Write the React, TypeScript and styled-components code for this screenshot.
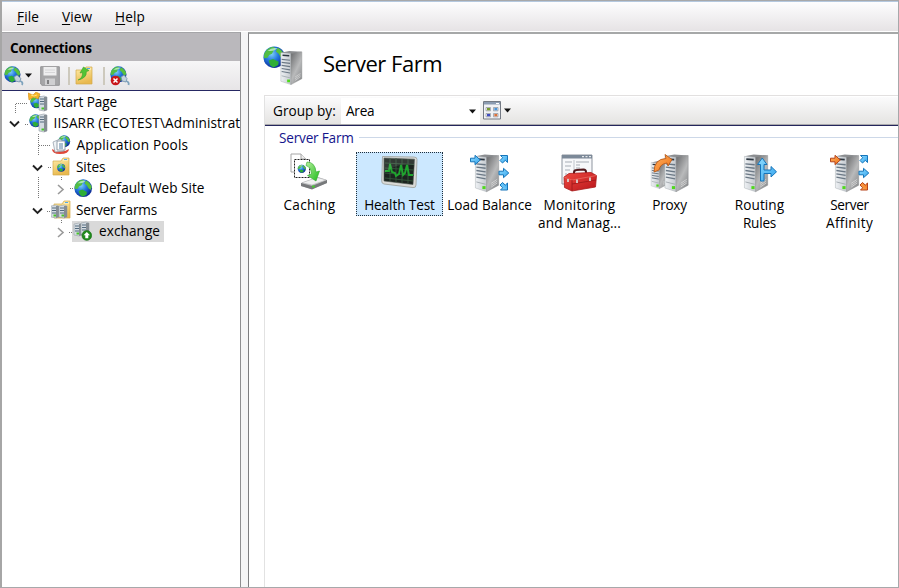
import React from "react";
import styled, { createGlobalStyle } from "styled-components";

const GlobalStyle = createGlobalStyle`
  * { box-sizing: border-box; }
  html, body { margin: 0; padding: 0; overflow: hidden; }
  body { font-family: "Open Sans", "Noto Sans", sans-serif; font-size: 13.6px; color: #000; background: #fff; }
  svg { display: block; flex: none; }
`;

const Window = styled.div`
  width: 899px;
  height: 588px;
  display: flex;
  flex-direction: column;
  background: #f5f5f6;
  border: 1px solid #a7a8aa;
  border-left: 2px solid #a6a6a6;
`;

const MenuBar = styled.nav`
  height: 31px;
  display: flex;
  align-items: center;
  flex: none;
  padding-left: 15px;
  gap: 23px;
  border-top: 1px solid #b4c8df;
  border-bottom: 1px solid #fff;
  background: linear-gradient(#fdfdfe, #e6e3e5);
`;

const Label = styled.span<{ $track?: number; $weight?: number }>`
  white-space: nowrap;
  letter-spacing: ${(p) => p.$track ?? 0}px;
  font-weight: ${(p) => p.$weight ?? 400};
  line-height: 18px;
  u { text-underline-offset: 2px; text-decoration-thickness: 1px; }
`;

const Body = styled.div`
  flex: 1;
  display: flex;
  gap: 7px;
  min-height: 0;
`;

const Sidebar = styled.aside`
  width: 239px;
  display: flex;
  flex-direction: column;
  flex: none;
  overflow: hidden;
  background: #fff;
  border-right: 1px solid #8e8e90;
  border-top: 1px solid #a5a5a8;
`;

const SideHeader = styled.header`
  height: 28px;
  flex: none;
  padding: 5px 0 0 8px;
  background: #bab8bc;
`;

const SideTools = styled.div`
  height: 30px;
  flex: none;
  display: flex;
  align-items: center;
  padding-left: 2px;
  background: linear-gradient(#f6f6f7, #e7e5e7);
  border-bottom: 1px solid #262863;
`;

const DropButton = styled.div`
  display: flex;
  align-items: center;
  gap: 1px;
  padding-right: 8px;
`;

const Divider = styled.i<{ $before: number; $after: number }>`
  width: 2px;
  height: 18px;
  margin: 0 ${(p) => p.$after}px 0 ${(p) => p.$before}px;
  background: #cdc9bd;
`;

const Tree = styled.div`
  display: flex;
  flex-direction: column;
`;

const TreeRow = styled.div`
  height: 21.6px;
  display: flex;
  align-items: center;
  flex: none;
`;

const Node = styled.div<{ $selected?: boolean; $gap: number }>`
  display: flex;
  align-items: center;
  gap: ${(p) => p.$gap}px;
  height: 21px;
  padding-right: 4px;
  background: ${(p) => (p.$selected ? "#d9d9d9" : "transparent")};
`;

const Pane = styled.main`
  flex: 1;
  min-width: 0;
  display: flex;
  flex-direction: column;
  background: #fff;
  border-left: 1px solid #7d7d80;
  border-top: 2px solid #a6a8a8;
`;

const TitleBar = styled.header`
  height: 61px;
  flex: none;
  display: flex;
  align-items: center;
  padding-left: 14px;
  gap: 19px;
`;

const Title = styled.h1`
  margin: 0 0 3px;
  font-size: 22px;
  font-weight: 400;
  line-height: 30px;
  letter-spacing: -0.48px;
`;

const Content = styled.section`
  flex: 1;
  margin-left: 15px;
  border-left: 1px solid #e2e2e2;
  border-top: 1px solid #e2e0e0;
`;

const GroupBar = styled.div`
  height: 30px;
  display: flex;
  align-items: center;
  padding-bottom: 1px;
  border-top: 1px solid #fff;
  border-bottom: 1px solid #24265c;
  box-shadow: inset 0 -1px #a9a9ac;
  background: linear-gradient(#fbfbfc, #e4e3e1);
`;

const GroupCaption = styled.div`
  width: 76px;
  padding-left: 8px;
`;

const Combo = styled.div`
  width: 139px;
  height: 26px;
  display: flex;
  align-items: center;
  justify-content: space-between;
  padding: 1px 4px 0 5px;
  background: #fff;
`;

const ViewButton = styled.div`
  display: flex;
  align-items: center;
  gap: 3px;
  padding-left: 3px;
`;

const GroupTitle = styled.div`
  display: flex;
  align-items: center;
  height: 22px;
  padding: 2px 0 0 14px;
  gap: 5px;
  color: #15158c;
  &::after { content: ""; flex: 1; height: 1px; margin-bottom: 2px; background: #cdd8e8; }
`;

const Features = styled.div`
  display: flex;
  gap: 3px;
  padding: 4px 0 0 1px;
`;

const Feature = styled.div<{ $selected?: boolean }>`
  width: 87px;
  min-height: 64px;
  align-self: flex-start;
  display: flex;
  flex-direction: column;
  align-items: center;
  border: 1px dotted ${(p) => (p.$selected ? "#1f2f3c" : "transparent")};
  background: ${(p) => (p.$selected ? "#cce8ff" : "transparent")};
`;

const Caption = styled.div`
  display: flex;
  flex-direction: column;
  align-items: center;
  margin-top: 3px;
`;

const Defs = styled.svg`
  position: absolute;
`;

const Gradients = () => (
  <Defs width="0" height="0">
    <defs>
      <radialGradient id="sea" cx=".38" cy=".35" r=".7">
        <stop offset="0" stopColor="#7fd0fa" />
        <stop offset=".45" stopColor="#2378df" />
        <stop offset="1" stopColor="#0b258f" />
      </radialGradient>
      <linearGradient id="front" x2="1">
        <stop offset="0" stopColor="#eef1f4" />
        <stop offset="1" stopColor="#c4c9ce" />
      </linearGradient>
      <linearGradient id="side" x2=".7" y2="1">
        <stop offset="0" stopColor="#68696b" />
        <stop offset=".6" stopColor="#b9babb" />
        <stop offset="1" stopColor="#8d8f91" />
      </linearGradient>
      <linearGradient id="folder" y2="1" x2=".3">
        <stop offset="0" stopColor="#fff0ae" />
        <stop offset="1" stopColor="#e9b94f" />
      </linearGradient>
      <linearGradient id="blue" y2="1">
        <stop offset="0" stopColor="#8edcff" />
        <stop offset="1" stopColor="#35a5ee" />
      </linearGradient>
      <linearGradient id="orange" y2="1">
        <stop offset="0" stopColor="#ffb15e" />
        <stop offset="1" stopColor="#f07318" />
      </linearGradient>
      <linearGradient id="green" y2="1">
        <stop offset="0" stopColor="#b4ef9b" />
        <stop offset="1" stopColor="#1fbc1c" />
      </linearGradient>
      <linearGradient id="red" y2="1">
        <stop offset="0" stopColor="#ee4a40" />
        <stop offset="1" stopColor="#b9141a" />
      </linearGradient>
    </defs>
  </Defs>
);

/* Globe on a 20-unit square. */
const Globe = ({ x = 0, y = 0, s = 1 }: { x?: number; y?: number; s?: number }) => (
  <g transform={`translate(${x} ${y}) scale(${s})`}>
    <circle cx="10" cy="10" r="9.6" fill="url(#sea)" />
    <path d="M1.5 6Q4 1.5 9 .7L12 2.5 9.5 4 8 7 5.5 8 4 10.5 1 11Q.3 8 1.5 6Z" fill="#52bd45" />
    <path d="M13 1.5Q18 4 19.3 9L18 12 15.8 10 14 7 11.5 5Z" fill="#58c03c" />
    <path d="M5 13L9 11.5 14 14 13.5 17 9.5 19.3 6.5 17.5Z" fill="#2fae36" />
    <path d="M4 4.5Q8 .8 13 2L10 4 7 4.5Z" fill="#e9ffff" opacity=".6" />
  </g>
);

/* Tower server on a 26 by 40 canvas. */
const Tower = ({ x = 0, y = 0, s = 1 }: { x?: number; y?: number; s?: number }) => (
  <g transform={`translate(${x} ${y}) scale(${s})`}>
    <path d="M1 2L11 0 26 1 13 4Z" fill="#8b8d90" />
    <path d="M1 2L13 3V40L1 36Z" fill="url(#front)" stroke="#a7adb2" strokeWidth=".5" />
    <path d="M13 3L26 1V33L13 40Z" fill="url(#side)" stroke="#86888a" strokeWidth=".5" />
    <path d="M2 10L12 11M2 13.6L12 14.8M2 17.2L12 18.6M2 20.8L12 22.4M2 24.4L12 26.2" stroke="#6b7885" strokeWidth="1.4" />
    <path d="M3 5L11 5.6" stroke="#2c3640" strokeWidth="1.8" />
    <path d="M2 29.5L12 32" stroke="#a2a9af" />
    <path d="M18 33L24.5 28.6M18 35L24.5 30.6M18 31L24.5 26.6" stroke="#e6e6e6" strokeWidth=".7" />
    <rect x="8.5" y="34" width="3.4" height="3.2" fill="#4fd81c" />
  </g>
);

const Rack = ({ x, y, h = 14 }: { x: number; y: number; h?: number }) => (
  <g transform={`translate(${x} ${y})`}>
    <path d={`M0 1L5 0 8 1V${h - 1}L5 ${h}L0 ${h - 1}Z`} fill="#d4dbe1" stroke="#98a1a8" strokeWidth=".6" />
    <path d={`M5 1L8 1V${h - 1}L5 ${h}Z`} fill="#858d94" />
    <path d="M1 3H5M1 5.5H5M1 8H5" stroke="#536b7e" />
    <rect x="2.5" y={h - 3.5} width="2.5" height="2" fill="#49c529" />
  </g>
);

const Caret = () => (
  <svg width="7" height="5" viewBox="0 0 7 5"><path d="M0 .5H7L3.5 4.5Z" fill="#111" /></svg>
);

const FolderShape = () => (
  <>
    <path d="M1 4H9L11 1H17V18H1Z" fill="url(#folder)" stroke="#d3a94c" strokeWidth=".7" />
    <path d="M11 3H16" stroke="#fff8d2" />
    <path d="M12 2.5H15" stroke="#55a8e7" />
  </>
);

const ConnectIcon = () => (
  <svg width="20" height="20" viewBox="0 0 20 20">
    <Globe s={0.84} />
    <path d="M10 11L13 9 17 12.5 15.5 16 11.5 15Z" fill="#c4d2de" stroke="#6c8ea9" strokeWidth=".8" />
    <path d="M16 15Q19.5 16 18 19" fill="none" stroke="#7fa3bd" strokeWidth="1.8" />
  </svg>
);

const DisconnectIcon = () => (
  <svg width="20" height="20" viewBox="0 0 20 20">
    <Globe s={0.84} />
    <path d="M11 11L14 9 17 12.5 16 16 12 15Z" fill="#c4d2de" stroke="#6c8ea9" strokeWidth=".8" />
    <path d="M16 15Q19.5 16 18.5 19" fill="none" stroke="#7fa3bd" strokeWidth="1.8" />
    <circle cx="5.5" cy="14.5" r="4.8" fill="#c8161b" />
    <path d="M3.5 12.5L7.5 16.5M7.5 12.5L3.5 16.5" stroke="#fff" strokeWidth="1.5" />
  </svg>
);

const SaveIcon = () => (
  <svg width="20" height="20" viewBox="0 0 20 20">
    <path d="M.7.7H19.3V19.3H2L.7 18Z" fill="#a6a6a8" stroke="#949496" />
    <path d="M3.5 1H16.5V9.5H3.5Z" fill="#eeeeef" />
    <path d="M5 12.5H15V19H5Z" fill="#cfcfd1" />
    <path d="M7 14H9V18H7Z" fill="#808082" />
    <path d="M5 4H15M5 6.5H15" stroke="#d6d6d8" />
  </svg>
);

const UpFolderIcon = () => (
  <svg width="18" height="19" viewBox="0 0 18 19">
    <FolderShape />
    <path d="M3 14Q8 12 7.5 6.5L5 7 8.5 1 14 4.5 11.3 5.7Q12 12 3 14Z" fill="#52c434" stroke="#3c9f2c" strokeWidth=".6" />
  </svg>
);

const StartIcon = () => (
  <svg width="20" height="20" viewBox="0 0 20 20">
    <Globe x={2} y={3} s={0.68} />
    <Rack x={11} y={4} h={15} />
    <path d="M0 1L5 3 8 0 12 2 10 7 6 5 1 8Z" fill="#f7b52a" stroke="#d48816" strokeWidth=".6" />
    <path d="M3 3L6 4 9 3" stroke="#ffe779" fill="none" />
  </svg>
);
const HostIcon = () => (
  <svg width="20" height="20" viewBox="0 0 20 20">
    <Globe x={0} y={1} s={0.67} />
    <Rack x={10} y={1} h={18} />
  </svg>
);
const PoolsIcon = () => (
  <svg width="20" height="20" viewBox="0 0 20 20">
    <Globe x={7} y={0} s={0.62} />
    <path d="M1 14Q1 19 9 19Q18 19 18 14L14 16H5Z" fill="#df493b" />
    <path d="M2 7L9 4 13 7V16L4 17Z" fill="#f0f3f6" stroke="#8e9aa6" strokeWidth=".7" />
    <path d="M6 6H14V15H6Z" fill="#fff" stroke="#798998" strokeWidth=".8" />
    <path d="M8 9H12M8 11H12M8 13H12" stroke="#537ca2" />
  </svg>
);
const SitesIcon = () => (
  <svg width="19" height="19" viewBox="0 0 19 19">
    <FolderShape />
    <Globe x={5} y={6.5} s={0.42} />
  </svg>
);
const SiteIcon = () => <svg width="20" height="20" viewBox="0 0 20 20"><Globe x={1} y={1} s={0.92} /></svg>;
const FarmsIcon = () => (
  <svg width="20" height="20" viewBox="0 0 20 20">
    <g transform="translate(2 0)"><FolderShape /></g>
    <Rack x={0} y={5} h={13} />
    <Rack x={8} y={5} h={13} />
  </svg>
);
const ExchangeIcon = () => (
  <svg width="20" height="20" viewBox="0 0 20 20">
    <Rack x={2} y={2} h={13} />
    <Rack x={9} y={1} h={13} />
    <circle cx="14.8" cy="14.5" r="4.9" fill="#1f8a1b" stroke="#1b6a17" strokeWidth=".5" />
    <path d="M14.8 11L18 14.2H16.3V17.2H13.3V14.2H11.6Z" fill="#fff" />
  </svg>
);

const HeaderIcon = () => (
  <svg width="41" height="41" viewBox="0 0 41 41">
    <Globe x={0} y={2} s={1.12} />
    <Tower x={17} y={7} s={0.84} />
  </svg>
);

const Svg40 = ({ children }: { children: React.ReactNode }) => (
  <svg width="40" height="40" viewBox="0 0 40 40">{children}</svg>
);

const CachingIcon = () => (
  <Svg40>
    <path d="M1 1H11L16 6V19H1Z" fill="#fff" stroke="#a5a5a5" />
    <path d="M11 1V6H16" fill="#eee" stroke="#a5a5a5" />
    <path d="M4.5 6.5H19.5V24.5H4.5Z" fill="#fff" stroke="#222" strokeDasharray="2 1" />
    <Globe x={7.5} y={11.5} s={0.43} />
    <path d="M11 30L28 24 37 27V30L22 36 11 33Z" fill="#b3b5b7" />
    <path d="M11 30L22 33 37 27V30L22 36.5 11 33Z" fill="#77797b" />
    <path d="M12 29.7L27 24.5 36 27 22 32Z" fill="#eff0f0" stroke="#b2b3b4" strokeWidth=".5" />
    <rect x="22" y="32.5" width="3" height="2" fill="#48c730" />
    <path d="M17 9Q25 9 26 19L29.5 18 26 28 17.5 22.5 21.5 21Q21 14 16 12.5Z" fill="url(#green)" stroke="#2da528" strokeWidth=".6" />
  </Svg40>
);
const HealthIcon = () => (
  <Svg40>
    <path d="M2.5 3.5L34 4Q37 4 37 6.5L36 32Q36 35 33 34.6L4 31Q1.6 30.6 1.7 28Z" fill="#d9dad7" stroke="#9c9f9b" strokeWidth=".8" />
    <path d="M4 5L34.5 6.2 33 31.5 4 28Z" fill="#1b241f" stroke="#4e5750" strokeWidth=".6" />
    <path d="M5 10L34 11.5M5 15L34 17M5 20L34 22.5M5 25L33 28M10 5V28M16 5V29M22 6V30M28 6V30" stroke="#35573c" strokeWidth=".9" />
    <path d="M5 18L9 18 10 11 12 19 15 20 16 23 19 21 21 12 23 22 25 20 27 12 29 22 33 22" stroke="#1fa52e" strokeWidth="1.9" fill="none" />
    <path d="M4 5L34.5 6.2V12Q18 9 4 20Z" fill="#fff" opacity=".1" />
  </Svg40>
);

const Arrow = ({ x, y, warm = false }: { x: number; y: number; warm?: boolean }) => (
  <path
    d="M0 3.2H4.5V.3L9.8 5 4.5 9.7V6.8H0Z"
    transform={`translate(${x} ${y})`}
    fill={warm ? "url(#orange)" : "url(#blue)"}
    stroke={warm ? "#b6431b" : "#1675ba"}
    strokeWidth="1"
  />
);
/* Diagonal arrow whose head fills the corner of an 8-unit square. */
const Corner = ({ x, y, flip = false, warm = false }: { x: number; y: number; flip?: boolean; warm?: boolean }) => (
  <path
    d="M1 .5H8V7.5L5.8 5.4 3 8 .5 5.5 3.2 2.7Z"
    transform={`translate(${x} ${y})${flip ? " translate(0 8) scale(1 -1)" : ""}`}
    fill={warm ? "url(#orange)" : "url(#blue)"}
    stroke={warm ? "#b6431b" : "#1675ba"}
  />
);

const BalanceIcon = ({ warm = false }: { warm?: boolean }) => (
  <Svg40>
    <Tower x={4.5} y={1.5} s={0.93} />
    <Arrow x={0.5} y={2} warm={warm} />
    <Corner x={29.5} y={2} />
    <Arrow x={29} y={15} />
    <Corner x={29.5} y={29.5} flip warm={warm} />
  </Svg40>
);
const MonitorIcon = () => (
  <Svg40>
    <path d="M2 2H32V31H2Z" fill="#f7f8fa" stroke="#8e959f" />
    <path d="M2 2H32V5.5H2Z" fill="#7c8998" />
    <path d="M22 3.7H24M25.5 3.7H27.5M29 3.7H31" stroke="#fff" />
    <path d="M5 9H12M5 13H11M5 17H10M5 21H7M16 9H29M16 12H20M16 15H20" stroke="#a7adb5" />
    <path d="M14 7V22" stroke="#c0c5cc" />
    <path d="M14 21V19.5Q14 17 16.5 17L23.5 16.5Q26 16.5 26 19V21" fill="none" stroke="#51191c" strokeWidth="2" />
    <path d="M4 24L9 20.5 31 19.5 36.5 22.5 35.5 34 12 38 4.5 34.5Z" fill="url(#red)" stroke="#a81a1b" strokeWidth=".8" />
    <path d="M4 24L12 27 36.5 22.5" stroke="#e9695f" fill="none" strokeWidth=".8" />
    <path d="M12 27V38M12 31L36 27" stroke="#9c1718" strokeWidth=".8" />
    <path d="M8 26V29M17 26.5V30M30 24.5V28" stroke="#d9d2cf" strokeWidth="1.8" />
  </Svg40>
);
const ProxyIcon = () => (
  <Svg40>
    <Tower x={0.5} y={8} s={0.69} />
    <Tower x={14} y={1.5} s={0.93} />
    <path d="M4 19Q4 6 16 5.5L15 1.5 22 6.5 18 13 17 10Q10 11 9 17Z" fill="url(#orange)" stroke="#b85a1b" strokeWidth=".9" />
  </Svg40>
);
const RoutingIcon = () => (
  <Svg40>
    <Tower x={3.5} y={1.5} s={0.93} />
    <path d="M20.5 28V11.5H17.5L22.2 5 27 11.5H24V17H31V13.5L36.5 18.8 31 24V20.5H24V28Z" fill="url(#blue)" stroke="#1675ba" />
  </Svg40>
);
const ViewIcon = () => (
  <svg width="18" height="19" viewBox="0 0 18 19">
    <path d="M.5.5H17.5V18H.5Z" fill="#f1f2f5" stroke="#747a84" />
    <path d="M1 1H17V3.5H1Z" fill="#8b9bb1" />
    <path d="M13 2.5H16" stroke="#fff" />
    <path d="M3 6.5H7.5V9.8H3ZM10.5 6.5H15V9.8H10.5ZM3 12.5H7.5V15.8H3ZM10.5 12.5H15V15.8H10.5Z" fill="#fff" stroke="#878d97" strokeWidth=".7" />
    <path d="M4 7H7V9.3H4Z" fill="#789b2e" />
    <path d="M11.3 7H14.3V9.3H11.3Z" fill="#4b94da" />
    <path d="M4 13H7V15.3H4Z" fill="#404dc0" />
    <path d="M11.3 13H14.3V15.3H11.3Z" fill="#dc713b" />
  </svg>
);

/* Branch lines and the expander to the left of a tree node. */
const Branch = ({ width, lines, open, closed }: { width: number; lines: string; open?: number; closed?: number }) => (
  <svg width={width} height="22" viewBox={`0 0 ${width} 22`}>
    <path d={lines} fill="none" stroke="#777" strokeDasharray="1 1" />
    {open !== undefined && <path d={`M${open} 9.5L${open + 4.5} 14L${open + 9} 9.5`} fill="none" stroke="#222" strokeWidth="1.9" />}
    {closed !== undefined && <path d={`M${closed} 8L${closed + 5} 12.5L${closed} 17`} fill="none" stroke="#999" strokeWidth="1.6" />}
  </svg>
);

const nodes = [
  { text: "Start Page", icon: <StartIcon />, width: 26, lines: "M13.5 22V12.5H26", gap: 5.5, track: -0.1 },
  { text: "IISARR (ECOTEST\\Administrat", icon: <HostIcon />, width: 27, lines: "M23 12.5H27", open: 8, gap: 4.5, track: 0.12 },
  { text: "Application Pools", icon: <PoolsIcon />, width: 49, lines: "M36.5 0V22M37 11.5H49", gap: 5.5, track: 0.16 },
  { text: "Sites", icon: <SitesIcon />, width: 50, lines: "M46 11.5H50", open: 31, gap: 5, track: -0.1 },
  { text: "Default Web Site", icon: <SiteIcon />, width: 71, lines: "M36.5 0V22M59.5 0V3M68 11.5H71", closed: 56, gap: 6, track: 0.02 },
  { text: "Server Farms", icon: <FarmsIcon />, width: 49, lines: "M45 12.5H49", open: 31, gap: 5, track: -0.2 },
  { text: "exchange", icon: <ExchangeIcon />, width: 70, lines: "M59.5 0V3M67 12.5H70", closed: 56, gap: 7, track: 0.07, selected: true },
];

const features = [
  { lines: ["Caching"], tracks: [0.25], icon: <CachingIcon /> },
  { lines: ["Health Test"], tracks: [-0.1], icon: <HealthIcon />, selected: true },
  { lines: ["Load Balance"], tracks: [0.02], icon: <BalanceIcon /> },
  { lines: ["Monitoring", "and Manag..."], tracks: [0.2, 0.12], icon: <MonitorIcon /> },
  { lines: ["Proxy"], tracks: [-0.25], icon: <ProxyIcon /> },
  { lines: ["Routing", "Rules"], tracks: [0.1, -0.25], icon: <RoutingIcon /> },
  { lines: ["Server", "Affinity"], tracks: [-0.35, 0.3], icon: <BalanceIcon warm /> },
];

export default function App() {
  return (
    <Window>
      <GlobalStyle />
      <Gradients />
      <MenuBar>
        <Label $track={0.1}><u>F</u>ile</Label>
        <Label $track={0.1}><u>V</u>iew</Label>
        <Label $track={0.1}><u>H</u>elp</Label>
      </MenuBar>
      <Body>
        <Sidebar>
          <SideHeader><Label $weight={700} $track={-0.22}>Connections</Label></SideHeader>
          <SideTools>
            <DropButton><ConnectIcon /><Caret /></DropButton>
            <SaveIcon />
            <Divider $before={8} $after={5} />
            <UpFolderIcon />
            <Divider $before={10} $after={5} />
            <DisconnectIcon />
          </SideTools>
          <Tree>
            {nodes.map((n) => (
              <TreeRow key={n.text}>
                <Branch width={n.width} lines={n.lines} open={n.open} closed={n.closed} />
                <Node $gap={n.gap} $selected={n.selected}>
                  {n.icon}
                  <Label $track={n.track}>{n.text}</Label>
                </Node>
              </TreeRow>
            ))}
          </Tree>
        </Sidebar>
        <Pane>
          <TitleBar>
            <HeaderIcon />
            <Title>Server Farm</Title>
          </TitleBar>
          <Content>
            <GroupBar>
              <GroupCaption><Label $track={0.03}>Group by:</Label></GroupCaption>
              <Combo><Label $track={-0.25}>Area</Label><Caret /></Combo>
              <ViewButton><ViewIcon /><Caret /></ViewButton>
            </GroupBar>
            <GroupTitle><Label $track={-0.2}>Server Farm</Label></GroupTitle>
            <Features>
              {features.map((f) => (
                <Feature key={f.lines.join(" ")} $selected={f.selected}>
                  {f.icon}
                  <Caption>{f.lines.map((l, i) => <Label key={l} $track={f.tracks[i]}>{l}</Label>)}</Caption>
                </Feature>
              ))}
            </Features>
          </Content>
        </Pane>
      </Body>
    </Window>
  );
}
